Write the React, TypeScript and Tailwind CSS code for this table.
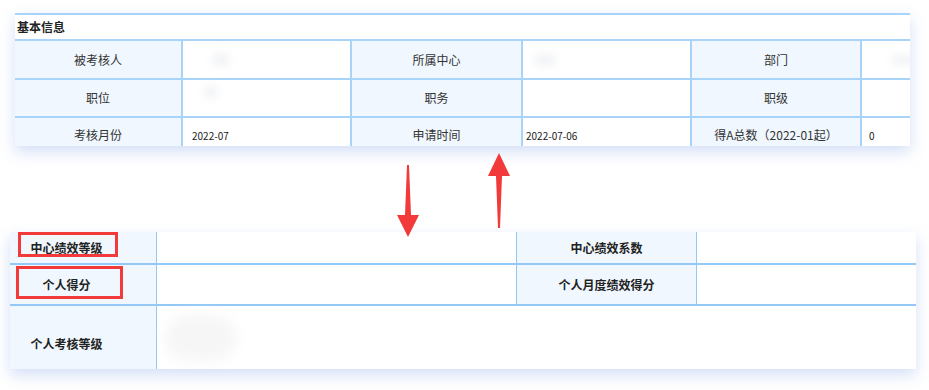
import React from "react";

const F = "font-['Noto_Sans_CJK_SC','Noto_Sans',sans-serif]";

function Blob({ w, h, cls = "" }: { w: number; h: number; cls?: string }) {
  return (
    <div
      className={`rounded-full bg-[#eceef2] blur-[4px] opacity-70 ${cls}`}
      style={{ width: w, height: h }}
    />
  );
}

function Label({ children }: { children: React.ReactNode }) {
  return (
    <div className="flex items-center justify-center bg-[#f0f7fe] text-[12px] text-[#333]">
      {children}
    </div>
  );
}

function Value({ children, pl = "pl-[9px]" }: { children?: React.ReactNode; pl?: string }) {
  return (
    <div className={`flex items-center bg-white border-l-2 border-[#a9d4f9] text-[10px] text-[#222] ${pl}`}>
      {children}
    </div>
  );
}

function LabelB({ children }: { children: React.ReactNode }) {
  return (
    <div className="flex items-center justify-center bg-[#f0f7fe] border-l-2 border-[#a9d4f9] text-[12px] text-[#333]">
      {children}
    </div>
  );
}

export default function App() {
  const cols = "grid grid-cols-[166px_169px_171px_169px_170px_170px]";
  return (
    <div className={`relative w-[929px] h-[390px] overflow-hidden bg-white ${F}`}>
      {/* Top panel */}
      <div className="ml-[15px] mt-[13px] w-[895px] h-[133px] overflow-hidden bg-white shadow-[0_6px_14px_rgba(160,185,235,0.45)]">
        <div className="border-t-2 border-[#a9d4f9] h-[26px] flex items-center pl-[2px] text-[12px] font-bold text-[#222]">
          基本信息
        </div>
        <div className={`${cols} w-[1015px] h-[39px] border-t-2 border-[#a9d4f9]`}>
          <Label>被考核人</Label>
          <Value>
            <Blob w={18} h={14} cls="ml-[20px]" />
          </Value>
          <LabelB>所属中心</LabelB>
          <Value>
            <Blob w={22} h={12} cls="ml-[2px]" />
          </Value>
          <LabelB>部门</LabelB>
          <Value>
            <Blob w={24} h={10} cls="ml-[20px]" />
          </Value>
        </div>
        <div className={`${cols} w-[1015px] h-[38px] border-t-2 border-[#a9d4f9]`}>
          <Label>职位</Label>
          <Value>
            <Blob w={14} h={14} cls="ml-[12px] -mt-[12px]" />
          </Value>
          <LabelB>职务</LabelB>
          <Value />
          <LabelB>职级</LabelB>
          <Value />
        </div>
        <div className={`${cols} w-[1015px] h-[39px] border-t-2 border-[#a9d4f9]`}>
          <Label>
            <span className="-mt-[4px]">考核月份</span>
          </Label>
          <Value>
            <span className="mt-[-2px]">2022-07</span>
          </Value>
          <LabelB>
            <span className="-mt-[4px]">申请时间</span>
          </LabelB>
          <Value pl="pl-[3px]">
            <span className="mt-[-2px]">2022-07-06</span>
          </Value>
          <LabelB>
            <span className="-mt-[4px]">得A总数（2022-01起）</span>
          </LabelB>
          <Value pl="pl-[7px]">
            <span className="mt-[-2px]">0</span>
          </Value>
        </div>
      </div>

      {/* Bottom panel */}
      <div className="ml-[10px] mt-[86px] w-[906px] h-[137px] overflow-hidden bg-white shadow-[0_6px_14px_rgba(160,185,235,0.45)]">
        <div className="-ml-[33px] w-[1100px]">
          <div className="grid grid-cols-[179px_360px_180px_381px] h-[31px]">
            <div className="flex items-center justify-center bg-[#f0f7fe] text-[12px] font-bold text-[#222]">
              中心绩效等级
            </div>
            <div className="border-l border-[#94c9f7] bg-white" />
            <div className="flex items-center justify-center border-l border-[#94c9f7] bg-[#f0f7fe] text-[12px] font-bold text-[#222]">
              中心绩效系数
            </div>
            <div className="border-l border-[#94c9f7] bg-white" />
          </div>
          <div className="grid grid-cols-[179px_360px_180px_381px] h-[41px] border-t-2 border-[#94c9f7]">
            <div className="flex items-center justify-center bg-[#f0f7fe] text-[12px] font-bold text-[#222]">
              个人得分
            </div>
            <div className="border-l border-[#94c9f7] bg-white" />
            <div className="flex items-center justify-center border-l border-[#94c9f7] bg-[#f0f7fe] text-[12px] font-bold text-[#222]">
              个人月度绩效得分
            </div>
            <div className="border-l border-[#94c9f7] bg-white" />
          </div>
          <div className="grid grid-cols-[179px_921px] h-[78px] border-t-2 border-[#94c9f7]">
            <div className="flex items-center justify-center bg-[#f0f7fe] text-[12px] font-bold text-[#222]">
              个人考核等级
            </div>
            <div className="flex items-center border-l border-[#94c9f7] bg-white pl-[8px]">
              <Blob w={72} h={46} cls="-mt-[12px] bg-[#f3f3f5] opacity-50 blur-[6px]" />
            </div>
          </div>
        </div>
      </div>

      {/* Red highlight boxes */}
      <div className="absolute left-[18px] top-[232px] w-[100px] h-[25px] border-[3px] border-[#f23a3a]" />
      <div className="absolute left-[16px] top-[266px] w-[107px] h-[33px] border-[3px] border-[#f23a3a]" />

      {/* Arrows */}
      <svg className="absolute left-0 top-0" width="929" height="390" viewBox="0 0 929 390">
        <polygon points="407,165 409,165 411,215 419,215 408,237 397,215 405,215" fill="#f23a3a" />
        <polygon points="499,153 510,176 502,176 500,228 498,228 496,176 488,176" fill="#f23a3a" />
      </svg>
    </div>
  );
}
